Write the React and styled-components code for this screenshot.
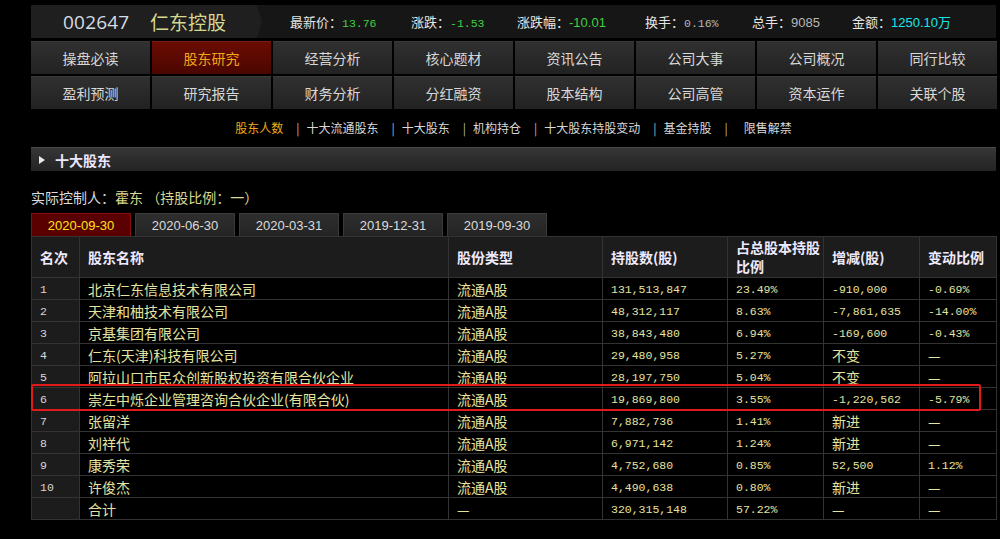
import React from "react";
import styled, { createGlobalStyle } from "styled-components";

const Global = createGlobalStyle`
  html, body { margin: 0; padding: 0; background: #000; }
  body { font-family: "Noto Sans CJK SC", "Liberation Sans", sans-serif; }
  * { box-sizing: border-box; }
`;

const CJK = `"Noto Sans CJK SC", "Liberation Sans", sans-serif`;
const MONO = `"Liberation Mono", "Noto Sans CJK SC", monospace`;

const Page = styled.div`
  width: 1000px;
  height: 539px;
  padding: 5px 4px 0 31px;
  overflow: hidden;
  display: flex;
  flex-direction: column;
`;

const TopBar = styled.div`
  height: 33px;
  width: 965px;
  background: #161616;
  display: flex;
  align-items: center;
`;

const Title = styled.div`
  width: 231px;
  height: 33px;
  background: #1f1f1f;
  clip-path: polygon(0 0, 226px 0, 231px 50%, 226px 100%, 0 100%);
  display: flex;
  align-items: center;
  padding-left: 32px;
  flex-shrink: 0;
`;

const Code = styled.span`
  font-family: "Open Sans", "Liberation Sans", sans-serif;
  font-size: 19px;
  color: #d4dce4;
  letter-spacing: 0.2px;
  width: 87px;
`;

const Name = styled.span`
  font-family: ${CJK};
  font-size: 19px;
  color: #d6d890;
  line-height: 1;
`;

const Stats = styled.div`
  display: flex;
  align-items: center;
  padding-left: 28px;
`;

const Stat = styled.div`
  width: ${(p) => p.$w}px;
  display: flex;
  align-items: baseline;
  white-space: nowrap;
`;

const StatLabel = styled.span`
  font-family: ${CJK};
  font-size: 13px;
  color: #e6e6e6;
`;

const StatValue = styled.span`
  font-family: ${MONO};
  font-size: 11.5px;
  color: ${(p) => p.$c};
`;

const StatValueSans = styled.span`
  font-family: "Liberation Sans", ${CJK};
  font-size: 13px;
  color: ${(p) => p.$c};
`;

const NavGrid = styled.div`
  margin-top: 3px;
  display: grid;
  grid-template-columns: repeat(8, 119px);
  grid-auto-rows: 33px;
  gap: 2px;
`;

const NavBtn = styled.div`
  display: flex;
  align-items: center;
  justify-content: center;
  font-family: ${CJK};
  font-size: 14px;
  color: ${(p) => (p.$active ? "#f0a818" : "#d8d8d8")};
  background: ${(p) =>
    p.$active
      ? "linear-gradient(#6a0c02, #4a0600)"
      : "linear-gradient(#303030, #222222)"};
  border-top: 1px solid ${(p) => (p.$active ? "#7a1a10" : "#3a3a3a")};
`;

const SubNav = styled.div`
  margin-top: 10px;
  height: 16px;
  display: flex;
  justify-content: center;
  align-items: center;
  font-family: ${CJK};
  font-size: 12px;
  color: #d8d8d8;
`;

const SubLink = styled.span`
  color: ${(p) => (p.$active ? "#f0a818" : "#d8d8d8")};
`;

const SubSep = styled.span`
  color: #bbb;
  padding: 0 ${(p) => p.$pr}px 0 13px;
`;

const Section = styled.div`
  margin-top: 12px;
  height: 24px;
  width: 965px;
  background: linear-gradient(#363636, #232323);
  border-top: 1px solid #4a4a4a;
  display: flex;
  align-items: center;
  padding-left: 8px;
`;

const Tri = styled.span`
  width: 0;
  height: 0;
  border-top: 4px solid transparent;
  border-bottom: 4px solid transparent;
  border-left: 6px solid #e8e8e8;
  margin-right: 10px;
`;

const SectionTitle = styled.span`
  font-family: ${CJK};
  font-size: 14px;
  font-weight: 700;
  color: #ece6ff;
`;

const Controller = styled.div`
  margin-top: 17px;
  height: 18px;
  font-family: ${CJK};
  font-size: 14px;
  line-height: 18px;
  color: #dcdcdc;
`;

const Hl = styled.span`
  color: #d8d890;
`;

const Tabs = styled.div`
  margin-top: 7px;
  display: flex;
  gap: 4px;
  height: 23px;
`;

const Tab = styled.div`
  width: 100px;
  height: 23px;
  display: flex;
  align-items: center;
  justify-content: center;
  font-family: "Liberation Sans", ${CJK};
  font-size: 13px;
  color: ${(p) => (p.$active ? "#ffe418" : "#dcdcdc")};
  background: ${(p) => (p.$active ? "#5a0000" : "linear-gradient(#2e2e2e, #242424)")};
  border: 1px solid ${(p) => (p.$active ? "#8a1010" : "#3a3a3a")};
  border-bottom: none;
`;

const TableWrap = styled.div`
  position: relative;
  width: 965px;
`;

const Table = styled.table`
  width: 965px;
  table-layout: fixed;
  border-collapse: collapse;
  border: 1px solid #3a3a3a;
`;

const Th = styled.th`
  height: 41px;
  padding: 0 0 0 8px;
  text-align: left;
  vertical-align: middle;
  white-space: nowrap;
  font-family: ${CJK};
  font-weight: 700;
  font-size: 14px;
  line-height: 19px;
  color: #eeeaff;
  background: #1c1c1c;
  border: 1px solid #333;
`;

const Td = styled.td`
  height: 22px;
  padding: 0 0 0 8px;
  font-family: ${CJK};
  font-size: 14px;
  line-height: 18px;
  color: ${(p) => (p.$first ? "#d8d8d8" : "#e4e4a0")};
  background: ${(p) => (p.$first ? "#1c1c1c" : "#000")};
  border: 1px solid #333;
  white-space: nowrap;
  overflow: hidden;
`;

const Num = styled.span`
  font-family: ${MONO};
  font-size: 11.5px;
  line-height: 18px;
`;

const Highlight = styled.div`
  position: absolute;
  left: 0;
  top: 148px;
  width: 950px;
  height: 27px;
  border: 2px solid #e31a1a;
  border-radius: 2px;
  pointer-events: none;
`;

const navItems = [
  "操盘必读", "股东研究", "经营分析", "核心题材", "资讯公告", "公司大事", "公司概况", "同行比较",
  "盈利预测", "研究报告", "财务分析", "分红融资", "股本结构", "公司高管", "资本运作", "关联个股",
];

const subLinks = ["股东人数", "十大流通股东", "十大股东", "机构持仓", "十大股东持股变动", "基金持股", "限售解禁"];

const tabs = ["2020-09-30", "2020-06-30", "2020-03-31", "2019-12-31", "2019-09-30"];

const cols = [48, 369, 154, 125, 96, 96, 77];

const rows = [
  ["1", "北京仁东信息技术有限公司", "流通A股", "131,513,847", "23.49%", "-910,000", "-0.69%"],
  ["2", "天津和柚技术有限公司", "流通A股", "48,312,117", "8.63%", "-7,861,635", "-14.00%"],
  ["3", "京基集团有限公司", "流通A股", "38,843,480", "6.94%", "-169,600", "-0.43%"],
  ["4", "仁东(天津)科技有限公司", "流通A股", "29,480,958", "5.27%", "不变", "—"],
  ["5", "阿拉山口市民众创新股权投资有限合伙企业", "流通A股", "28,197,750", "5.04%", "不变", "—"],
  ["6", "崇左中烁企业管理咨询合伙企业(有限合伙)", "流通A股", "19,869,800", "3.55%", "-1,220,562", "-5.79%"],
  ["7", "张留洋", "流通A股", "7,882,736", "1.41%", "新进", "—"],
  ["8", "刘祥代", "流通A股", "6,971,142", "1.24%", "新进", "—"],
  ["9", "康秀荣", "流通A股", "4,752,680", "0.85%", "52,500", "1.12%"],
  ["10", "许俊杰", "流通A股", "4,490,638", "0.80%", "新进", "—"],
  ["", "合计", "—", "320,315,148", "57.22%", "—", "—"],
];

const isNum = (v) => /^[-\d,.%]+$/.test(v);

const stats = [
  { label: "最新价：", value: "13.76", c: "#3fd23f", w: 121 },
  { label: "涨跌：", value: "-1.53", c: "#3fd23f", w: 106 },
  { label: "涨跌幅：", value: "-10.01", c: "#3fd23f", w: 128, sans: true },
  { label: "换手：", value: "0.16%", c: "#b8b8b8", w: 107 },
  { label: "总手：", value: "9085", c: "#b8b8b8", w: 100, sans: true },
  { label: "金额：", value: "1250.10万", c: "#19e6ea", w: 130, sans: true },
];

export default function App() {
  return (
    <>
      <Global />
      <Page>
        <TopBar>
          <Title>
            <Code>002647</Code>
            <Name>仁东控股</Name>
          </Title>
          <Stats>
            {stats.map((s) => (
              <Stat key={s.label} $w={s.w}>
                <StatLabel>{s.label}</StatLabel>
                {s.sans ? (
                  <StatValueSans $c={s.c}>{s.value}</StatValueSans>
                ) : (
                  <StatValue $c={s.c}>{s.value}</StatValue>
                )}
              </Stat>
            ))}
          </Stats>
        </TopBar>

        <NavGrid>
          {navItems.map((n) => (
            <NavBtn key={n} $active={n === "股东研究"}>{n}</NavBtn>
          ))}
        </NavGrid>

        <SubNav>
          {subLinks.map((s, i) => (
            <React.Fragment key={s}>
              {i > 0 && <SubSep $pr={i === 6 ? 16 : 7}>|</SubSep>}
              <SubLink $active={i === 0}>{s}</SubLink>
            </React.Fragment>
          ))}
        </SubNav>

        <Section>
          <Tri />
          <SectionTitle>十大股东</SectionTitle>
        </Section>

        <Controller>
          实际控制人：<Hl>霍东 （持股比例：一）</Hl>
        </Controller>

        <Tabs>
          {tabs.map((t, i) => (
            <Tab key={t} $active={i === 0}>{t}</Tab>
          ))}
        </Tabs>

        <TableWrap>
          <Table>
            <colgroup>
              {cols.map((w, i) => (
                <col key={i} style={{ width: w }} />
              ))}
            </colgroup>
            <thead>
              <tr>
                <Th>名次</Th>
                <Th>股东名称</Th>
                <Th>股份类型</Th>
                <Th>持股数(股)</Th>
                <Th>占总股本持股<br />比例</Th>
                <Th>增减(股)</Th>
                <Th>变动比例</Th>
              </tr>
            </thead>
            <tbody>
              {rows.map((r, ri) => (
                <tr key={ri}>
                  {r.map((v, ci) => (
                    <Td key={ci} $first={ci === 0}>
                      {isNum(v) ? <Num>{v}</Num> : v}
                    </Td>
                  ))}
                </tr>
              ))}
            </tbody>
          </Table>
          <Highlight />
        </TableWrap>
      </Page>
    </>
  );
}
